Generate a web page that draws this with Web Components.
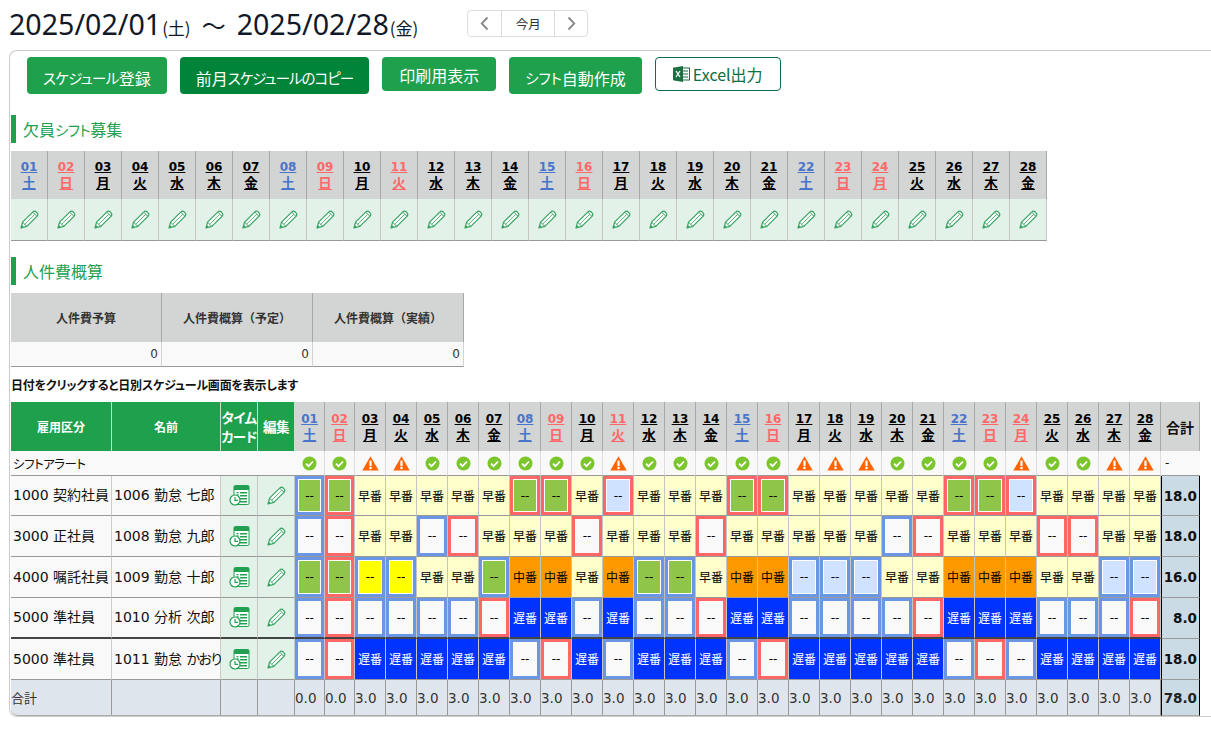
<!DOCTYPE html>
<html lang="ja">
<head>
<meta charset="utf-8">
<title>スケジュール</title>
<style>
html,body{margin:0;padding:0;background:#fff;overflow:hidden;height:744px;}
body{font-family:"DejaVu Sans","Noto Sans CJK JP",sans-serif;color:#111;}
</style>
</head>
<body>
<x-page></x-page>
<script>
const JP='"Noto Sans CJK JP","Noto Sans",sans-serif';
const DV='"DejaVu Sans","Noto Sans CJK JP",sans-serif';
const DAYS=['土','日','月','火','水','木','金'];
function def(name,css,render){
  class E extends HTMLElement{
    constructor(){super();this.attachShadow({mode:'open'});}
    connectedCallback(){this.shadowRoot.innerHTML='<style>:host,:host *{font-feature-settings:"palt" !important}'+css+'</style>'+render(this);}
  }
  customElements.define(name,E);
}
def('x-icon',':host{display:inline-flex;line-height:0}svg{display:block}',h=>{
  const n=h.getAttribute('name');
  if(n==='pencil')return `<svg width="19" height="19" viewBox="0 0 19 19" fill="none" stroke="#33a35f" stroke-width="1.200" stroke-linejoin="round"><path d="M1 18l1.600-5.800L12.700 2.100c1.100-1.100 2.500-1.100 3.500-.1l.8.8c1 1 1 2.400-.1 3.500L6.800 16.400z" fill="#fff"/><path d="M2.600 12.200l4.200 4.200" stroke-width="1"/><path d="M4.700 14.300L14.600 4.400" stroke-width=".8"/><path d="M12.700 2.100l4.200 4.200" stroke-width="1"/><path d="M1 18l.8-3 2.200 2.200z" fill="#33a35f" stroke="none"/></svg>`;
  if(n==='card')return `<svg width="21" height="21" viewBox="0 0 21 21"><rect x="5" y=".5" width="15" height="19" rx="1.300" fill="#fff" stroke="#22a052"/><path d="M5 2a1.500 1.500 0 0 1 1.500-1.500h12A1.500 1.500 0 0 1 20 2v3H5z" fill="#22a052"/><path d="M11 7.700h7M11 10.700h7M11 13.700h7M11 16.700h7" stroke="#22a052" stroke-width="1.500"/><path d="M7.500 7.700h2M7.500 10h2" stroke="#22a052" stroke-width="1.300"/><circle cx="6" cy="15" r="5" fill="#fff" stroke="#22a052" stroke-width="1.200"/><path d="M6 12v3.300h3" fill="none" stroke="#22a052" stroke-width="1.200"/></svg>`;
  if(n==='ok')return `<svg width="15" height="15" viewBox="0 0 15 15"><circle cx="7.500" cy="7.500" r="7" fill="#7ac62c"/><path d="M4 7.700l2.500 2.500L11 5.500" fill="none" stroke="#fff" stroke-width="1.800"/></svg>`;
  if(n==='warn')return `<svg width="17" height="15" viewBox="0 0 17 15"><path d="M8.500.3L16.700 14.600H.3z" fill="#ff6400"/><rect x="7.400" y="4.600" width="2.200" height="5.600" fill="#fff"/><rect x="7.400" y="11" width="2.200" height="2.200" fill="#fff"/></svg>`;
  if(n==='excel')return `<svg width="17" height="16" viewBox="0 0 17 16"><rect x="7" y="2" width="9.500" height="12" fill="#fff" stroke="#1d6f42"/><path d="M9 5h6M9 8h6M9 11h6" stroke="#1d6f42" stroke-width="1.200"/><path d="M0 1.800L10 0v16L0 14.200z" fill="#1d6f42"/><path d="M3 5l4 6M7 5l-4 6" stroke="#fff" stroke-width="1.300" fill="none"/></svg>`;
  if(n==='prev')return `<svg width="9" height="15" viewBox="0 0 9 15"><path d="M7.500 1.500L1.700 7.500l5.800 6" fill="none" stroke="#888" stroke-width="1.800"/></svg>`;
  return `<svg width="9" height="15" viewBox="0 0 9 15"><path d="M1.500 1.500l5.800 6-5.800 6" fill="none" stroke="#888" stroke-width="1.800"/></svg>`;
});
def('x-nav',`:host{display:inline-flex;height:27px;box-sizing:border-box;border:1px solid #ddd;border-radius:4px;font:12.500px ${JP};color:#333;align-items:stretch;background:#fff}
div{display:flex;align-items:center;justify-content:center}
.a{width:33px}.b{width:52px;border:solid #ddd;border-width:0 1px}.c{width:32px}`,
 ()=>`<div class="a"><x-icon name="prev"></x-icon></div><div class="b">今月</div><div class="c"><x-icon name="next"></x-icon></div>`);
def('x-title',`:host{display:flex;height:50px;box-sizing:border-box;padding:5px 0 0 9px;align-items:flex-start;color:#111827;font-family:"Noto Sans","Noto Sans CJK JP",sans-serif}
.t{display:flex;align-items:baseline;font-size:28.600px;line-height:38px}
small{font-size:17px;margin-left:1px;font-family:${JP}}
.w{font-family:${JP};margin:0 11px 0 11px;font-size:24px}
x-nav{margin:5px 0 0 49px}`,
 ()=>`<div class="t"><span>2025/02/01</span><small>(土)</small><span class="w">〜</span><span>2025/02/28</span><small>(金)</small></div><x-nav></x-nav>`);
def('x-btn',`:host{display:inline-flex;box-sizing:border-box;align-items:center;justify-content:center;background:#1ea04c;color:#fff;border-radius:4px;font:16px/20px ${JP};height:37px;padding:5px 16px 0;white-space:nowrap}
:host([dark]){background:#00843a}
:host([short]){height:34px;padding:1px 17px 0}
:host([line]){background:#fff;color:#0b6e45;border:1px solid #0b6e45;padding-top:0;gap:3px}`,
 h=>(h.hasAttribute('line')?'<x-icon name="excel"></x-icon>':'')+'<slot></slot>');
def('x-bar',`:host{display:flex;gap:13px;align-items:flex-start;padding-left:16px}`,()=>'<slot></slot>');
def('x-head',`:host{display:flex;align-items:center;box-sizing:border-box;height:28px;border-left:5px solid #1ea04c;padding-left:7px;margin-bottom:8px;font:16px ${JP};color:#1ea04c}`,()=>'<slot></slot>');
def('x-date',`:host{display:flex;align-items:center;justify-content:center;box-sizing:border-box;background:#d3d5d5;border-right:1px solid #a8a8a8;height:100%}
span{display:block;text-align:center;font:bold 12px/15px ${DV};color:#000;text-decoration:underline;text-underline-offset:1px}
b{display:block;font:bold 13.500px/15px ${JP};text-decoration:underline;text-underline-offset:1px}
:host([c="b"]) span{color:#4a74c9}:host([c="r"]) span{color:#ff6868}`,
 h=>{const d=+h.getAttribute('d');return `<span>${String(d).padStart(2,'0')}<b>${h.getAttribute('w')}</b></span>`});
function dateAttrs(i){const w=DAYS[i%7];const red=w==='日'||i===10||i===22;const c=w==='土'?'b':red?'r':(i===23?'r':'');return `d="${i+1}" w="${i===10?'火':w}" c="${c}"`;}
def('x-daytable',`:host{display:grid;grid-template-columns:repeat(28,37px);grid-template-rows:48px 42px;width:1036px}
.p{display:flex;align-items:center;justify-content:center;box-sizing:border-box;background:#e2f2e8;border-right:1px solid #c6c6c6;border-bottom:1px solid #999}`,
 ()=>{let a='',b='';for(let i=0;i<28;i++){a+=`<x-date ${dateAttrs(i)}></x-date>`;b+=`<div class="p"><x-icon name="pencil"></x-icon></div>`;}return a+b;});
def('x-cost',`:host{display:grid;grid-template-columns:repeat(3,151px);grid-template-rows:49px 25px;width:453px;color:#333}
.h{background:#d3d5d5;border-right:1px solid #a8a8a8;box-sizing:border-box;display:flex;align-items:center;justify-content:center;font:bold 12px ${JP};font-feature-settings:normal !important}
.v{background:#f9f9f9;border-right:1px solid #d4d4d4;border-bottom:1px solid #999;box-sizing:border-box;display:flex;align-items:center;justify-content:flex-end;padding-right:3px;font:12px ${DV}}`,
 ()=>`<div class="h">人件費予算</div><div class="h">人件費概算（予定）</div><div class="h">人件費概算（実績）</div><div class="v">0</div><div class="v">0</div><div class="v">0</div>`);
def('x-shift',`:host{display:block;box-sizing:border-box;border-right:1px solid #c4c4c4;border-bottom:1px solid #999;background:#f9f9f9;font:12px/1 ${JP};color:#000;min-width:0}
:host([thick]){border-bottom:2px solid #444}
.f{box-sizing:border-box;height:100%;display:flex;align-items:center;justify-content:center}
.d{font:12px/1 ${DV}}
.box{border:3px solid #6a96e4;box-shadow:inset 0 0 0 1px #fff}
.red{border-color:#ff6666}
.g{background:#8fc549}.l{background:#cfe2ff}.w{background:#f9f9f9;box-shadow:none}.y{background:#ffff00}
.E{background:#ffffcc}.M{background:#ff9900}.L{background:#0033ff;color:#fff}`,
 h=>{const t=h.getAttribute('t');
   if(t==='E')return '<div class="f E">早番</div>';
   if(t==='M')return '<div class="f M">中番</div>';
   if(t==='L')return '<div class="f L">遅番</div>';
   return `<div class="f d box ${t[0]} ${t[1]==='r'?'red':''}">--</div>`;});
const E='E',M='M',L='L';
const R=[
 ['gb','gr',E,E,E,E,E,'gr','gr',E,'lr',E,E,E,'gr','gr',E,E,E,E,E,'gr','gr','lr',E,E,E,E],
 ['wb','wr',E,E,'wb','wr',E,E,E,'wr',E,E,E,'wr',E,E,E,E,E,'wb','wr',E,E,E,'wr','wr',E,E],
 ['gb','gr','yb','yb',E,E,'gb',M,M,E,M,'gb','gb',E,M,M,'lb','lb','lb',E,E,M,M,M,E,E,'lb','lb'],
 ['wb','wr','wb','wb','wb','wb','wr',L,L,'wb',L,'wb','wb','wr',L,L,'wb','wb','wb','wb','wr',L,L,L,'wb','wb','wb','wr'],
 ['wb','wr',L,L,L,L,L,'wb','wr',L,'wb',L,L,L,'wb','wr',L,L,L,L,L,'wb','wr','wb',L,L,L,L]
];
const WARN=[2,3,10,16,17,18,23,26,27];
const PEOPLE=[['1000 契約社員','1006 勤怠 七郎','18.0'],['3000 正社員','1008 勤怠 九郎','18.0'],['4000 嘱託社員','1009 勤怠 十郎','16.0'],['5000 準社員','1010 分析 次郎','8.0'],['5000 準社員','1011 勤怠 <i>かおり</i>','18.0']];
def('x-grid',`:host{display:grid;grid-template-columns:101px 109px 37px 37px 30px 30px repeat(26,31px) 39px;grid-template-rows:49px 25px 40px 41px 41px 41px 41px 36px;width:1189px;font:14px ${DV};color:#111}
.c{box-sizing:border-box;display:flex;align-items:center;min-width:0;white-space:nowrap}
.n i{font-style:normal;letter-spacing:-1.500px}
.hg{background:#1ea04c;color:#fff;justify-content:center;text-align:center;font:bold 12px ${JP};border-right:1px solid #c9dccf}
.big{font-size:13.500px;line-height:19px;letter-spacing:-.6px}
.tot{background:#d3d5d5;justify-content:center;font:bold 14px ${JP};border-right:1px solid #a8a8a8}
.al{background:#f9f9f9;border-bottom:1px solid #999}
.alt{grid-column:1/5;padding-left:2px;font:12.500px ${JP};letter-spacing:-.5px}
.ic{justify-content:center;border-right:1px solid #ddd}
.n{background:#f9f9f9;border-right:1px solid #ccc;border-bottom:1px solid #999;padding:0 0 3px 2px;white-space:pre}
.e{background:#e2f2e8;border-right:1px solid #c6c6c6;border-bottom:1px solid #999;justify-content:center}
.k{border-bottom:2px solid #444}
.s{background:#cbdbe5;border-left:1px solid #000;border-right:1px solid #000;border-bottom:1px solid #999;justify-content:flex-end;padding-right:2px;font-weight:bold;font-size:13.500px}
.f{background:#dfe5ec;border-right:1px solid #999;border-bottom:1px solid #aaa;color:#333;font-size:13.500px}
.f0{font:13px ${JP};border-bottom-left-radius:7px}
.fs{background:#cbdbe5;border-left:1px solid #000;border-right:1px solid #000;border-bottom:1px solid #aaa;justify-content:flex-end;padding-right:2px;font-weight:bold;color:#222;font-size:13.500px}`,
 ()=>{
  let o=`<div class="c hg">雇用区分</div><div class="c hg">名前</div><div class="c hg big">タイム<br>カード</div><div class="c hg big">編集</div>`;
  for(let i=0;i<28;i++)o+=`<x-date ${dateAttrs(i)}></x-date>`;
  o+=`<div class="c tot">合計</div>`;
  o+=`<div class="c al alt">シフトアラート</div>`;
  for(let i=0;i<28;i++)o+=`<div class="c al ic"><x-icon name="${WARN.includes(i)?'warn':'ok'}"></x-icon></div>`;
  o+=`<div class="c al" style="padding-left:3px;font-size:12px;border-left:1px solid #f9f9f9">-</div>`;
  PEOPLE.forEach((p,r)=>{
    const k=r===3?' k':'';
    o+=`<div class="c n${k}"><div>${p[0]}</div></div><div class="c n${k}"><div>${p[1]}</div></div><div class="c e${k}"><x-icon name="card"></x-icon></div><div class="c e${k}"><x-icon name="pencil"></x-icon></div>`;
    R[r].forEach(t=>{o+=`<x-shift t="${t}"${r===3?' thick':''}></x-shift>`;});
    o+=`<div class="c s${k}">${p[2]}</div>`;
  });
  o+=`<div class="c f f0">合計</div><div class="c f"></div><div class="c f"></div><div class="c f"></div>`;
  for(let i=0;i<28;i++)o+=`<div class="c f">${i<2?'0.0':'3.0'}</div>`;
  o+=`<div class="c fs">78.0</div>`;
  return o;
 });
def('x-panel',`:host{display:block;box-sizing:border-box;margin-left:9px;height:667px;border:solid #ccc;border-width:1px 0 1px 1px;border-radius:8px 0 0 8px;padding:6px 0 0 1px;overflow:hidden}
x-bar{margin-bottom:21px}
x-daytable{margin-bottom:16px}
.note{height:35px;display:flex;align-items:center;font:bold 12px ${JP};color:#111;letter-spacing:-.2px}
.k{font-size:14.500px;letter-spacing:-.7px}
.k2{font-size:14.500px;letter-spacing:-1px}
.k3{font-size:14.500px}
.k4{font-size:14.500px;letter-spacing:-.5px}`,
 ()=>`<x-bar><x-btn><span class="k">スケジュール</span>登録</x-btn><x-btn dark>前月<span class="k2">スケジュールのコピー</span></x-btn><x-btn short>印刷用表示</x-btn><x-btn><span class="k3">シフト</span>自動作成</x-btn><x-btn line short>Excel出力</x-btn></x-bar>
 <x-head>欠員<span class="k4">シフト</span>募集</x-head><x-daytable></x-daytable><x-head>人件費概算</x-head><x-cost></x-cost><div class="note">日付をクリックすると日別スケジュール画面を表示します</div><x-grid></x-grid>`);
def('x-page',`:host{display:block;width:1211px;height:744px}`,()=>`<x-title></x-title><x-panel></x-panel>`);
</script>
</body>
</html>
